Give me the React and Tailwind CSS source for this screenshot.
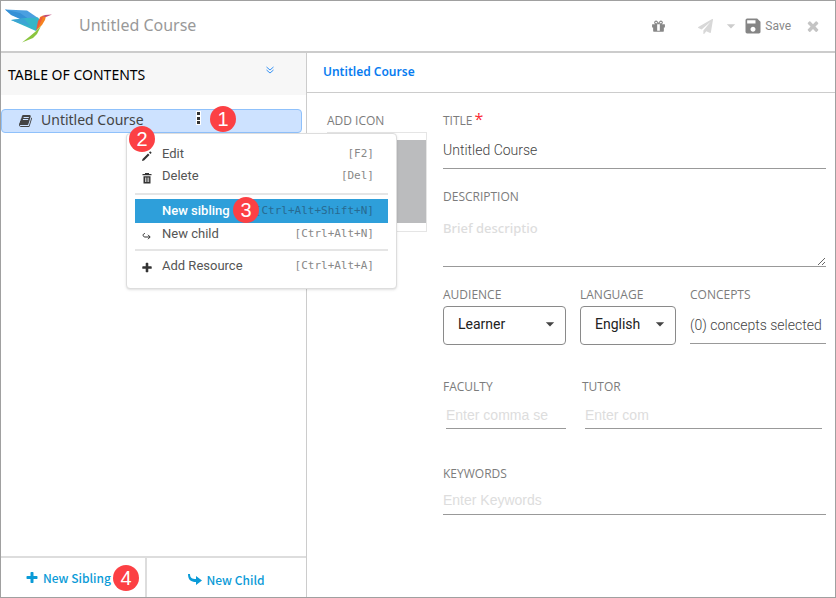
import {MdSave, MdArrowDropDown} from "react-icons/md";

const noto = "font-['Noto_Sans',sans-serif]";
const open = "font-['Open_Sans',sans-serif]";
const PATHS = {
  book: "M1639 478q40 57 18 129l-275 906q-19 64-76.5 107.5t-122.5 43.5h-923q-77 0-148.5-53.5t-99.5-131.5q-24-67-2-127 0-4 3-27t4-37q1-8-3-21.5t-3-19.5q2-11 8-21t16.5-23.5 16.5-23.5q23-38 45-91.5t30-91.5q3-10 .5-30t-.5-28q3-11 17-28t17-23q21-36 42-92t25-90q1-9-2.5-32t.5-28q4-13 22-30.5t22-22.5q19-26 42.5-84.5t27.5-96.5q1-8-3-25.5t-2-26.5q2-8 9-18t18-23 17-21q8-12 16.5-30.5t15-35 16-36 19.5-32 26.5-23.5 36-11.5 47.5 5.5l-1 3q38-9 51-9h761q74 0 114 56t18 130l-274 906q-36 119-71.5 153.5t-128.5 34.5h-869q-27 0-38 15-11 16-1 43 24 70 144 70h923q29 0 56-15.5t35-41.5l300-987q7-22 5-57 38 15 59 43zm-1064 2q-4 13 2 22.5t20 9.5h608q13 0 25.5-9.5t16.5-22.5l21-64q4-13-2-22.5t-20-9.5h-608q-13 0-25.5 9.5t-16.5 22.5zm-83 256q-4 13 2 22.5t20 9.5h608q13 0 25.5-9.5t16.5-22.5l21-64q4-13-2-22.5t-20-9.5h-608q-13 0-25.5 9.5t-16.5 22.5z",
  times: "M1490 1322q0 40-28 68l-136 136q-28 28-68 28t-68-28l-294-294-294 294q-28 28-68 28t-68-28l-136-136q-28-28-28-68t28-68l294-294-294-294q-28-28-28-68t28-68l136-136q28-28 68-28t68 28l294 294 294-294q28-28 68-28t68 28l136 136q28 28 28 68t-28 68l-294 294 294 294q28 28 28 68z",
  plus: "M1600 736v192q0 40-28 68t-68 28h-416v416q0 40-28 68t-68 28h-192q-40 0-68-28t-28-68v-416h-416q-40 0-68-28t-28-68v-192q0-40 28-68t68-28h416v-416q0-40 28-68t68-28h192q40 0 68 28t28 68v416h416q40 0 68 28t28 68z",
  plane: "M1764 11q33 24 27 64l-256 1536q-5 29-32 45-14 8-31 8-11 0-24-5l-453-185-242 295q-18 23-49 23-13 0-22-4-19-7-30.5-23.5t-11.5-36.5v-349l864-1059-1069 925-395-162q-37-14-40-55-2-40 32-59l1664-960q15-9 32-9 20 0 36 11z",
  gift: "M1056 1356v-716h-320v716q0 25 18 38.5t46 13.5h192q28 0 46-13.5t18-38.5zm-456-844h195l-126-161q-26-31-69-31-40 0-68 28t-28 68 28 68 68 28zm688-96q0-40-28-68t-68-28q-43 0-69 31l-125 161h194q40 0 68-28t28-68zm376 256v320q0 14-9 23t-23 9h-96v416q0 40-28 68t-68 28h-1088q-40 0-68-28t-28-68v-416h-96q-14 0-23-9t-9-23v-320q0-14 9-23t23-9h440q-93 0-158.5-65.5t-65.5-158.5 65.5-158.5 158.5-65.5q107 0 168 77l128 165 128-165q61-77 168-77 93 0 158.5 65.5t65.5 158.5-65.5 158.5-158.5 65.5h440q14 0 23 9t9 23z",
};

function Glyph({ name, className }) {
  return (
    <svg viewBox="0 0 1792 1792" className={className} fill="currentColor" aria-hidden="true">
      <path d={PATHS[name]} />
    </svg>
  );
}

function Logo() {
  return (
    <svg viewBox="0 0 56 40" className="h-10 w-14" role="img" aria-label="Home">
      <path d="M3 3.500 25 4.500 36 12 20 13 10 9Z" fill="#4a9fe0" />
      <path d="M3 3.500 18 7 26 12.500 18 13 9 9Z" fill="#3590d6" />
      <path d="M9 14 24 12 36 11.500 38 14 36 22 34 25Z" fill="#35b5c8" />
      <path d="M9 14 22 12.500 28 20 17 17Z" fill="#3ba4d4" />
      <path d="M38 11 41 9.500 44 10 43 14 40 19 35 24Z" fill="#f5821f" />
      <path d="M36 15 39 11 41 11 37 20 34 25Z" fill="#ef5a3a" />
      <path d="M40 10.500 43 9 50 8.500 44 11Z" fill="#c04f7e" />
      <path d="M33 26 39 20 35 28 31 32 20 36.500 27 31Z" fill="#8bc53f" />
    </svg>
  );
}

function Badge({ n, className }) {
  return (
    <span className={"absolute z-20 flex size-[26px] items-center justify-center rounded-full bg-[#fc4044] font-['Liberation_Sans',sans-serif] text-xl text-white " + className}>
      {n}
    </span>
  );
}

function PencilIcon() {
  return (
    <svg viewBox="0 0 12 12" className="size-3" fill="currentColor" aria-hidden="true">
      <path d="M1 11 1.500 9 7 3.500 8.500 5 3 10.500ZM8 2.500 9.200 1.300 10.700 2.800 9.500 4Z" />
    </svg>
  );
}
function TrashIcon() {
  return (
    <svg viewBox="0 0 12 12" className="size-3" fill="currentColor" aria-hidden="true">
      <path fillRule="evenodd" d="M1.500 2H4V1h4v1h2.500v1.200h-9ZM2.500 4.200h7V11.500H2.500ZM4 5.500v4.500h.7v-4.500ZM5.700 5.500v4.500h.7v-4.500ZM7.400 5.500v4.500h.7v-4.500Z" />
    </svg>
  );
}
function ChildIcon() {
  return (
    <svg viewBox="0 0 12 12" className="size-3" fill="none" stroke="currentColor" aria-hidden="true">
      <path d="M4 3.500C1.500 3.500 1.500 7 4 7H9M7 4.800 9.200 7 7 9.200" />
    </svg>
  );
}

function MenuItem({ icon, label, keys, active }) {
  return (
    <button
      type="button"
      role="menuitem"
      className={"flex w-full items-center pr-3.5 pl-1.5 text-left " + (active ? "h-6 bg-[#2e9fda] font-medium text-white" : "h-[22px] text-[#555]")}
    >
      <span className="flex w-[21px] pt-1 text-[#333]">{icon}</span>
      <span className="grow font-['Roboto',sans-serif] text-[13px]">{label}</span>
      <span className={"font-['DejaVu_Sans_Mono',monospace] text-[11px] font-normal " + (active ? "text-[#286a91]" : "text-[#888]")}>{keys}</span>
    </button>
  );
}

const labelClass = "block text-xs leading-4 text-[#7c7c7c] " + open;
const inputClass = "block w-full min-w-0 border-b border-[#999] bg-transparent text-sm text-[#444] outline-none placeholder:text-[#ddd]";

function Dropdown({ id, label, value, className }) {
  return (
    <div className={"shrink-0 " + className}>
      <label htmlFor={id} className={labelClass}>{label}</label>
      <div className="relative mt-[3px]">
        <select id={id} defaultValue={value} className="block h-[39px] w-full appearance-none rounded border border-[#8a8a8a] bg-white pb-1 pl-3.5 font-['Roboto',sans-serif] text-sm text-[#222]">
          <option>{value}</option>
        </select>
        <MdArrowDropDown className="pointer-events-none absolute top-2 right-1.5 size-5 text-[#444]" />
      </div>
    </div>
  );
}

export default function App() {
  return (
    <div className="flex min-h-screen flex-col border border-[#a0a0a0] bg-white font-['Liberation_Sans',sans-serif]">
      <header className="flex h-[52px] items-center border-b-2 border-[#ccc] pr-3.5 pl-px">
        <Logo />
        <h1 className={"ml-[21px] grow pb-0.5 text-base text-[#999] " + noto}>Untitled Course</h1>
        <button type="button" aria-label="Gift" className="text-[#888]"><Glyph name="gift" className="size-[15px]" /></button>
        <button type="button" aria-label="Publish" className="ml-8 text-[#d8d8d8]"><Glyph name="plane" className="size-[15px]" /></button>
        <button type="button" aria-label="Publish options" className="ml-2 text-[#ccc]"><MdArrowDropDown className="size-5" /></button>
        <button type="button" className="ml-0.5 flex items-center gap-0.5 font-['Roboto',sans-serif] text-xs text-[#888]"><MdSave className="size-5 text-[#858585]" />Save</button>
        <button type="button" aria-label="Close" className="ml-3.5 text-[#c4c4c4]"><Glyph name="times" className="size-4" /></button>
      </header>
      <div className="flex grow">
        <aside className="flex w-[306px] shrink-0 flex-col border-r border-[#ccc]">
          <div className="flex h-[42px] items-center justify-between bg-[#f7f7f7] pr-[31px] pl-[7px]">
            <h2 className={"pt-0.5 text-sm text-black " + noto}>TABLE OF CONTENTS</h2>
            <button type="button" aria-label="Expand all" className="mb-2 text-[#3592f5]">
              <svg viewBox="0 0 10 10" className="size-2.5" fill="none" stroke="currentColor" aria-hidden="true"><path d="M1.500 2 5 5 8.500 2M1.500 5 5 8 8.500 5" /></svg>
            </button>
          </div>
          <div className="relative mt-3.5 mr-1">
            <div className="flex h-6 items-center rounded-sm border border-[#8fc1fb] bg-[#cde2ff] pl-[17px] text-[#444]">
              <Glyph name="book" className="size-[14px]" />
              <span className={"ml-2 w-[155px] pb-0.5 text-sm " + noto}>Untitled Course</span>
              <button type="button" aria-label="More" className="mb-1.5 flex h-[14px] w-[5px] flex-col items-center justify-between bg-white py-px">
                <i className="size-[3px] bg-[#333]" /><i className="size-[3px] bg-[#333]" /><i className="size-[3px] bg-[#333]" />
              </button>
            </div>
            <Badge n="1" className="top-[-3px] left-[209px]" />
            <Badge n="2" className="top-[17px] left-[128px]" />
            <div role="menu" className="absolute top-6 left-[125px] z-10 w-[271px] rounded-sm border border-[#ddd] bg-white px-2 pt-[9px] pb-[11px] shadow">
              <MenuItem icon={<PencilIcon />} label="Edit" keys="[F2]" />
              <MenuItem icon={<TrashIcon />} label="Delete" keys="[Del]" />
              <hr className="mt-1.5 mb-1 border-t-2 border-[#e5e5e5]" />
              <div className="relative">
                <MenuItem active label="New sibling" keys="[Ctrl+Alt+Shift+N]" />
                <Badge n="3" className="top-[-2px] left-[98px]" />
              </div>
              <MenuItem icon={<ChildIcon />} label="New child" keys="[Ctrl+Alt+N]" />
              <hr className="mt-1 mb-1 border-t-2 border-[#e5e5e5]" />
              <MenuItem icon={<Glyph name="plus" className="size-3" />} label="Add Resource" keys="[Ctrl+Alt+A]" />
            </div>
          </div>
          <div className="mt-auto flex h-[41px] border-t-2 border-[#ddd] font-['Noto_Sans_CJK_SC',sans-serif] text-xs font-medium text-[#0b9bd7]">
            <div className="relative w-[146px] border-r-2 border-[#ddd]">
              <button type="button" className="flex h-full items-center pl-6"><Glyph name="plus" className="mr-1 size-[14px]" />New Sibling</button>
              <Badge n="4" className="top-[7px] left-[112px]" />
            </div>
            <button type="button" className="flex grow items-center justify-center pt-1">
              <svg viewBox="0 0 14 12" className="mr-1 h-3 w-[14px]" fill="currentColor" aria-hidden="true"><path d="M0 0H2C2 4 4 5 8 5V2L14 6.500 8 11V8C3 8 0 6 0 0Z" /></svg>
              New Child
            </button>
          </div>
        </aside>
        <main className="min-w-0 grow">
          <div className="flex h-10 items-center border-b border-[#ccc] pb-0.5 pl-4">
            <a href="#course" className={"text-xs font-semibold text-[#087cf0] " + noto}>Untitled Course</a>
          </div>
          <div className="flex pt-5 pr-[9px] pl-5">
            <section className="w-[100px] shrink-0">
              <h3 className={labelClass}>ADD ICON</h3>
              <div className="mt-[3px] h-[100px] border border-[#e5e5e5] pt-[7px]"><div className="h-[83px] bg-[#bbbcbe]" /></div>
            </section>
            <form className="ml-4 min-w-0 grow">
              <label htmlFor="title" className={labelClass}>TITLE<span className="ml-0.5 align-top text-base leading-3 text-red-500">*</span></label>
              <input id="title" defaultValue="Untitled Course" className={inputClass + " h-10 pt-0.5 font-['Roboto',sans-serif] font-light"} />
              <label htmlFor="description" className={labelClass + " mt-5"}>DESCRIPTION</label>
              <textarea id="description" placeholder="Brief descriptio" className={"block h-[62px] w-full resize-y border-b border-[#999] bg-transparent pt-3.5 text-[13px] font-medium text-[#444] outline-none placeholder:text-[#ddd] " + noto} />
              <div className="mt-5 flex">
                <Dropdown id="audience" label="AUDIENCE" value="Learner" className="w-[123px]" />
                <Dropdown id="language" label="LANGUAGE" value="English" className="ml-3.5 w-24" />
                <div className="ml-3.5 min-w-0 grow">
                  <label htmlFor="concepts" className={labelClass}>CONCEPTS</label>
                  <input id="concepts" readOnly value="(0) concepts selected" className={inputClass + " h-[41px] pt-1 font-['Roboto',sans-serif] font-light"} />
                </div>
              </div>
              <div className="mt-[34px] flex">
                <div className="w-[139px]">
                  <label htmlFor="faculty" className={labelClass}>FACULTY</label>
                  <div className="mt-2.5 pr-4 pl-[3px]"><input id="faculty" placeholder="Enter comma se" className={inputClass + " h-6 pb-1"} /></div>
                </div>
                <div className="grow">
                  <label htmlFor="tutor" className={labelClass}>TUTOR</label>
                  <div className="mt-2.5 pr-1 pl-[3px]"><input id="tutor" placeholder="Enter com" className={inputClass + " h-6 pb-1"} /></div>
                </div>
              </div>
              <label htmlFor="keywords" className={labelClass + " mt-[37px]"}>KEYWORDS</label>
              <input id="keywords" placeholder="Enter Keywords" className={inputClass + " mt-1 h-[29px]"} />
            </form>
          </div>
        </main>
      </div>
    </div>
  );
}
